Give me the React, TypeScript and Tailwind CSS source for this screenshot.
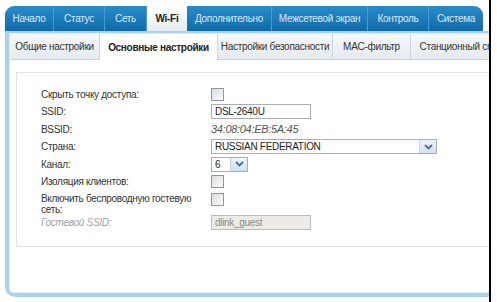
import React from "react"

const topTabs = [
  { label: "Начало", w: "w-[49px]" },
  { label: "Статус", w: "w-[51px]" },
  { label: "Сеть", w: "w-[42px]" },
  { label: "Wi-Fi", w: "w-[40px]", active: true },
  { label: "Дополнительно", w: "w-[85px]" },
  { label: "Межсетевой экран", w: "w-[96px]" },
  { label: "Контроль", w: "w-[61px]" },
  { label: "Система", w: "w-[54px]", last: true },
]

const subTabs = [
  { label: "Общие настройки", w: "w-[90px]" },
  { label: "Основные настройки", w: "w-[118px]", active: true },
  { label: "Настройки безопасности", w: "w-[115px]" },
  { label: "MAC-фильтр", w: "w-[78px]" },
  { label: "Станционный список", w: "w-[110px]" },
]

function Checkbox() {
  return (
    <div className="h-[13px] w-[13px] border border-[#8f979d] bg-gradient-to-br from-[#d9dcde] to-[#fbfbfb]" />
  )
}

function Chevron() {
  return (
    <div className="flex h-full w-[17px] items-center justify-center border-l border-[#c3d3e3] bg-gradient-to-b from-[#eef4fa] to-[#d2e0ee]">
      <svg width="9" height="6" viewBox="0 0 9 6">
        <path d="M1 1 L4.5 4.5 L8 1" fill="none" stroke="#3b6fb6" strokeWidth="1.8" />
      </svg>
    </div>
  )
}

export default function App() {
  return (
    <div className="flex h-[302px] w-[497px] overflow-hidden bg-white font-['Liberation_Sans',Arial,sans-serif] text-[10px] tracking-[-0.3px] text-[#333]">
      <div className="w-[489px] shrink-0 overflow-hidden pl-[5px] pt-[6px]">
        {/* main menu */}
        <div className="flex h-[25px] items-end">
          {topTabs.map((t, i) => (
            <div
              key={t.label}
              className={`${t.w} flex h-full shrink-0 items-center justify-center whitespace-nowrap ${
                t.active
                  ? "bg-gradient-to-b from-white to-[#e6ecf0] font-bold text-[#222]"
                  : "border-r border-[#4a9bd1] bg-gradient-to-b from-[#2a8ccb] to-[#106ba8] text-[#d8e9f5]"
              } ${i === 0 ? "rounded-tl-[9px]" : ""} ${t.last ? "rounded-tr-[9px] border-r-0" : ""}`}
            >
              {t.label}
            </div>
          ))}
        </div>

        {/* frame */}
        <div className="h-[266px] w-[520px] rounded-bl-[10px] border-b-[4px] border-l-[4px] border-t-[2px] border-[#acd2ea]">
          <div className="flex h-full flex-col rounded-bl-[7px] border-b border-l border-t border-[#d9ecf7]">
            <div className="flex h-[26px] shrink-0 border-b border-[#cbd5dc] bg-gradient-to-b from-[#f7f9fb] to-[#e4eaee]">
              {subTabs.map((t) => (
                <div
                  key={t.label}
                  className={`${t.w} flex shrink-0 items-center justify-center whitespace-nowrap border-r border-[#cbd5dc] ${
                    t.active ? "-mb-px bg-white font-bold text-[#222]" : "text-[#333]"
                  }`}
                >
                  {t.label}
                </div>
              ))}
            </div>

            <div className="flex-1 bg-white pl-[6px] pt-[12px]">
              <div className="h-[175px] w-[600px] border border-[#dde3e7] pl-[24px] pt-[12px]">
                <div className="grid grid-cols-[170px_1fr]">
                  <div className="flex h-[18px] items-center">Скрыть точку доступа:</div>
                  <div className="flex h-[18px] items-center"><Checkbox /></div>

                  <div className="flex h-[17px] items-center">SSID:</div>
                  <div className="flex h-[17px] items-center">
                    <div className="flex h-[15px] w-[100px] items-center border border-[#a7afb5] px-[3px] text-[#222]">DSL-2640U</div>
                  </div>

                  <div className="flex h-[18px] items-center">BSSID:</div>
                  <div className="flex h-[18px] items-center text-[11px] italic text-[#555]">34:08:04:EB:5A:45</div>

                  <div className="flex h-[17px] items-center">Страна:</div>
                  <div className="flex h-[17px] items-center">
                    <div className="flex h-[15px] w-[226px] items-center justify-between border border-[#a7afb5] pl-[3px] text-[#222]">
                      RUSSIAN FEDERATION
                      <Chevron />
                    </div>
                  </div>

                  <div className="flex h-[18px] items-center">Канал:</div>
                  <div className="flex h-[18px] items-center">
                    <div className="flex h-[15px] w-[37px] items-center justify-between border border-[#a7afb5] pl-[3px] text-[#222]">
                      6
                      <Chevron />
                    </div>
                  </div>

                  <div className="flex h-[17px] items-center">Изоляция клиентов:</div>
                  <div className="flex h-[17px] items-center"><Checkbox /></div>

                  <div className="h-[25px] whitespace-nowrap pt-[3px] leading-[11px]">
                    Включить беспроводную гостевую
                    <br />
                    сеть:
                  </div>
                  <div className="h-[25px] pt-[3px]"><Checkbox /></div>

                  <div className="flex h-[15px] items-center italic text-[#a0a0a0]">Гостевой SSID:</div>
                  <div className="flex h-[15px] items-center">
                    <div className="flex h-[15px] w-[100px] items-center border border-[#b5bbbf] bg-[#ecebe8] px-[3px] text-[#8a8a8a]">dlink_guest</div>
                  </div>
                </div>
              </div>
            </div>
          </div>
        </div>
      </div>
      <div className="h-full w-[2px] shrink-0 bg-black" />
    </div>
  )
}
